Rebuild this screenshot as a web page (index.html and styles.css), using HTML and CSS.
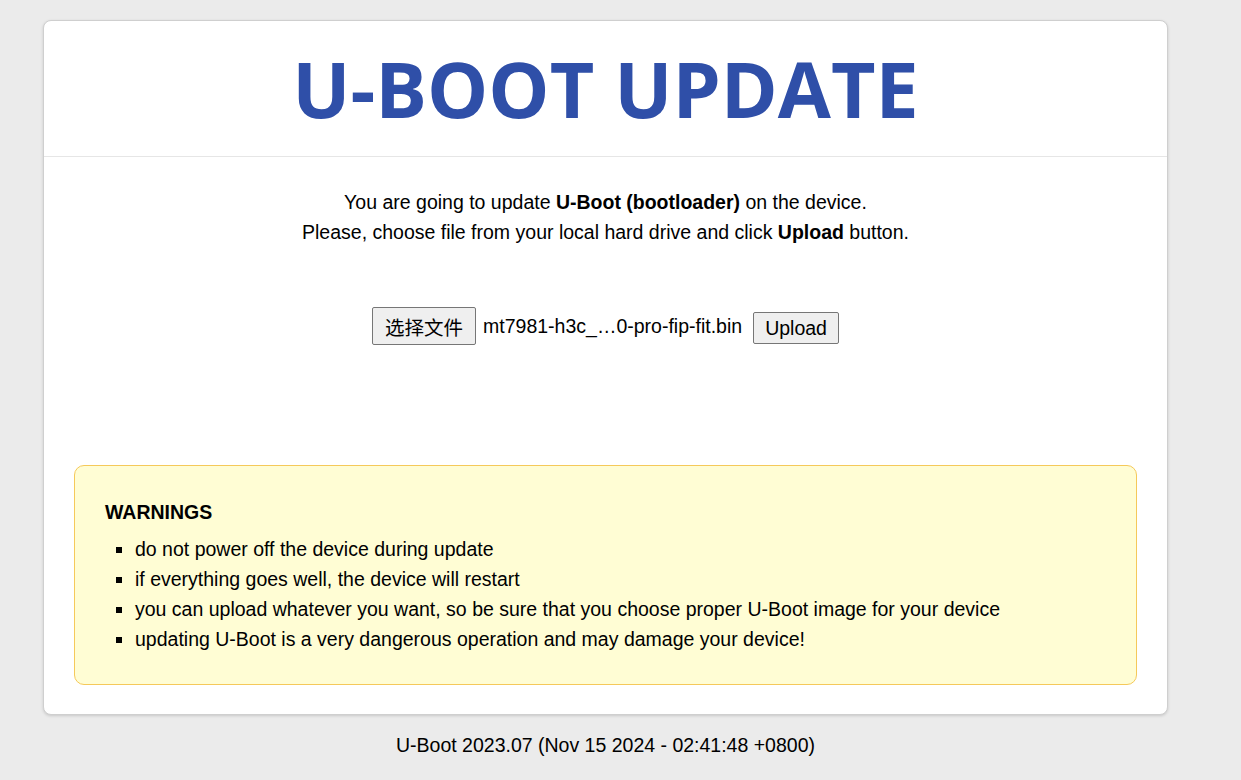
FILE: index.html
```html
<!DOCTYPE html>
<html lang="en">
<head>
    <meta charset="UTF-8">
    <title>U-Boot update</title>
    <link rel="stylesheet" href="styles.css">
</head>
<body>
    <div class="main">
        <div class="card">
            <h1 class="title">U-BOOT UPDATE</h1>
            <div class="content">
                <p class="intro">You are going to update <strong>U-Boot (bootloader)</strong> on the device.<br>Please, choose file from your local hard drive and click <strong>Upload</strong> button.</p>
                <form class="upload" onsubmit="return false;">
                    <button type="button" class="file-button">选择文件</button>
                    <span class="file-name">mt7981-h3c_…0-pro-fip-fit.bin</span>
                    <button type="submit" class="upload-button">Upload</button>
                </form>
                <div class="warnings">
                    <strong class="warnings-title">WARNINGS</strong>
                    <ul>
                        <li>do not power off the device during update</li>
                        <li>if everything goes well, the device will restart</li>
                        <li>you can upload whatever you want, so be sure that you choose proper U-Boot image for your device</li>
                        <li>updating U-Boot is a very dangerous operation and may damage your device!</li>
                    </ul>
                </div>
            </div>
        </div>
        <div class="footer">U-Boot 2023.07 (Nov 15 2024 - 02:41:48 +0800)</div>
    </div>
</body>
</html>
```

FILE: styles.css
```css
body {
    margin: 0;
    background-color: #ebebeb;
    font-family: 'Liberation Sans', Arial, 'Noto Sans CJK SC', sans-serif;
    font-size: 19.5px;
    color: #000;
}
.main {
    width: 1125px;
    margin: 20px 0 0 43px;
}
.card {
    background-color: #fff;
    border: 1px solid #cfcfcf;
    border-radius: 8px;
    box-shadow: 0 1px 3px rgba(0,0,0,0.15);
}
.title {
    margin: 0;
    padding: 22px 0 21px;
    text-align: center;
    font-family: 'Open Sans', sans-serif;
    font-size: 77px;
    font-weight: 700;
    line-height: 92px;
    color: #2f4fa8;
    border-bottom: 1px solid #e6e6e6;
}
.content {
    padding: 30px 30px 29px;
}
.intro {
    margin: 0;
    text-align: center;
    line-height: 30px;
}
.upload {
    display: flex;
    justify-content: center;
    align-items: center;
    gap: 7px;
    margin-top: 59px;
    height: 40px;
}
.file-button,
.upload-button {
    font-family: 'Liberation Sans', Arial, 'Noto Sans CJK SC', sans-serif;
    font-size: 19.5px;
    background-color: #efefef;
    border: 1px solid #767676;
    border-radius: 2px;
    color: #000;
}
.file-button {
    height: 38px;
    padding: 0 12px;
}
.upload-button {
    height: 32px;
    padding: 0 11px;
    margin: 4px 0 0 4px;
}
.warnings {
    margin-top: 119px;
    padding: 35px 30px 30px;
    background-color: #fffdd4;
    border: 1px solid #f5c95a;
    border-radius: 10px;
}
.warnings-title {
    display: block;
    line-height: 22px;
}
.warnings ul {
    margin: 11px 0 0;
    padding-left: 30px;
    list-style-type: square;
}
.warnings li {
    line-height: 30px;
}
.footer {
    text-align: center;
    padding: 19px 0;
}
```
